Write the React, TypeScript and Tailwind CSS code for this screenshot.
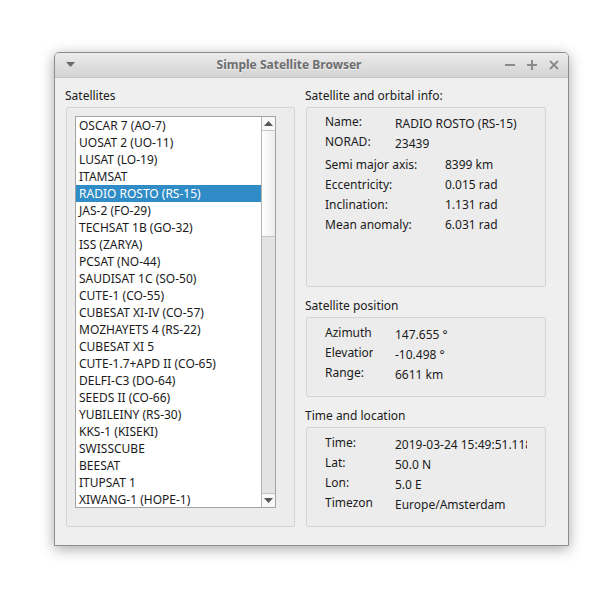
import React from "react";

const sats = [
  "OSCAR 7 (AO-7)",
  "UOSAT 2 (UO-11)",
  "LUSAT (LO-19)",
  "ITAMSAT",
  "RADIO ROSTO (RS-15)",
  "JAS-2 (FO-29)",
  "TECHSAT 1B (GO-32)",
  "ISS (ZARYA)",
  "PCSAT (NO-44)",
  "SAUDISAT 1C (SO-50)",
  "CUTE-1 (CO-55)",
  "CUBESAT XI-IV (CO-57)",
  "MOZHAYETS 4 (RS-22)",
  "CUBESAT XI 5",
  "CUTE-1.7+APD II (CO-65)",
  "DELFI-C3 (DO-64)",
  "SEEDS II (CO-66)",
  "YUBILEINY (RS-30)",
  "KKS-1 (KISEKI)",
  "SWISSCUBE",
  "BEESAT",
  "ITUPSAT 1",
  "XIWANG-1 (HOPE-1)",
];

function Row({ label, value, labelW = "w-[48px]", gap = "ml-[22px]" }: { label: string; value: string; labelW?: string; gap?: string }) {
  return (
    <div className="flex h-[20px] items-start">
      <div className={`${labelW} overflow-hidden whitespace-nowrap leading-[18px]`}>{label}</div>
      <div className={`${gap} mt-[1.5px] overflow-hidden whitespace-nowrap leading-[18px] flex-1`}>{value}</div>
    </div>
  );
}

export default function App() {
  return (
    <div className="min-h-[605px] w-[616px] bg-white pt-[52px] pl-[54px] text-[12px] text-[#1b1b1b]" style={{ fontFamily: '"Noto Sans", "Open Sans", sans-serif' }}>
      <div className="w-[515px] h-[494px] border border-[#8d8d8d] rounded-t-[5px] bg-[#efefef] shadow-[0_3px_14px_rgba(0,0,0,0.35)] flex flex-col overflow-hidden">
        {/* Title bar */}
        <div className="h-[25px] flex items-center bg-gradient-to-b from-[#ececec] to-[#d3d3d3] border-b border-[#c4c4c4] relative">
          <div className="w-[30px] flex justify-center">
            <svg width="9" height="6" viewBox="0 0 9 6"><path d="M0 0H9L4.5 5Z" fill="#6a6a6a" /></svg>
          </div>
          <div className="flex-1 text-center font-bold text-[12px] text-[#6e6e6e] pr-[12px] [text-shadow:0_1px_0_rgba(255,255,255,0.6)]">Simple Satellite Browser</div>
          <div className="flex items-center gap-[12px] pr-[9px]">
            <svg width="10" height="10" viewBox="0 0 10 10"><rect x="0" y="4" width="10" height="2" fill="#8a8a8a" /></svg>
            <svg width="10" height="10" viewBox="0 0 10 10"><rect x="0" y="4" width="10" height="2" fill="#8a8a8a" /><rect x="4" y="0" width="2" height="10" fill="#8a8a8a" /></svg>
            <svg width="10" height="10" viewBox="0 0 10 10"><path d="M1 1L9 9M9 1L1 9" stroke="#8a8a8a" strokeWidth="1.8" /></svg>
          </div>
        </div>

        {/* Body */}
        <div className="flex pl-[10px] pt-[9px] gap-[10px]">
          {/* Left column */}
          <div className="w-[230px] flex flex-col">
            <div className="h-[20px] leading-[18px] pl-[0px] text-[#1b1b1b]">Satellites</div>
            <div className="ml-[1px] w-[229px] h-[420px] border border-[#d4d4d4] bg-[#ececec] rounded-[2px] pl-[8px] pt-[8px]">
              <div className="w-[201px] h-[392px] border border-[#a3a3a3] bg-white flex">
                <div className="flex-1 overflow-hidden">
                  {sats.map((s, i) => (
                    <div
                      key={s}
                      className={`h-[17px] leading-[17px] pl-[3px] whitespace-nowrap ${i === 4 ? "bg-[#308cc6] text-white" : ""}`}
                    >
                      {s}
                    </div>
                  ))}
                </div>
                <div className="w-[14px] border-l border-[#b4b4b4] flex flex-col bg-[#e3e3e3]">
                  <div className="h-[14px] bg-[#f8f8f8] border-b border-[#c4c4c4] flex items-center justify-center">
                    <svg width="9" height="5" viewBox="0 0 9 5"><path d="M4.5 0L9 5H0Z" fill="#555" /></svg>
                  </div>
                  <div className="h-[106px] bg-gradient-to-r from-white to-[#ececec] border-b border-[#c4c4c4]" />
                  <div className="flex-1" />
                  <div className="h-[14px] bg-[#f8f8f8] border-t border-[#c4c4c4] flex items-center justify-center">
                    <svg width="9" height="5" viewBox="0 0 9 5"><path d="M0 0H9L4.5 5Z" fill="#555" /></svg>
                  </div>
                </div>
              </div>
            </div>
          </div>

          {/* Right column */}
          <div className="w-[241px] flex flex-col">
            <div className="h-[20px] leading-[18px]">Satellite and orbital info:</div>
            <div className="ml-[1px] h-[180px] border border-[#d4d4d4] bg-[#ececec] rounded-[2px] pl-[18px] pt-[5px]">
              <Row label="Name:" value="RADIO ROSTO (RS-15)" labelW="w-[60px]" gap="ml-[10px]" />
              <div className="h-[23px]">
                <Row label="NORAD:" value="23439" labelW="w-[60px]" gap="ml-[10px]" />
              </div>
              <div className="flex flex-col">
                {[
                  ["Semi major axis:", "8399 km"],
                  ["Eccentricity:", "0.015 rad"],
                  ["Inclination:", "1.131 rad"],
                  ["Mean anomaly:", "6.031 rad"],
                ].map(([l, v]) => (
                  <div key={l} className="flex h-[20px] leading-[18px]">
                    <div className="w-[120px] whitespace-nowrap">{l}</div>
                    <div className="whitespace-nowrap">{v}</div>
                  </div>
                ))}
              </div>
            </div>

            <div className="h-[20px] leading-[18px] mt-[10px]">Satellite position</div>
            <div className="ml-[1px] h-[80px] border border-[#d4d4d4] bg-[#ececec] rounded-[2px] pl-[18px] pt-[6px]">
              <Row label="Azimuth" value="147.655 °" />
              <Row label="Elevation" value="-10.498 °" />
              <Row label="Range:" value="6611 km" />
            </div>

            <div className="h-[20px] leading-[18px] mt-[10px]">Time and location</div>
            <div className="ml-[1px] h-[100px] border border-[#d4d4d4] bg-[#ececec] rounded-[2px] pl-[18px] pt-[6px] pr-[18px]">
              <Row label="Time:" value="2019-03-24 15:49:51.118" />
              <Row label="Lat:" value="50.0 N" />
              <Row label="Lon:" value="5.0 E" />
              <Row label="Timezone" value="Europe/Amsterdam" />
            </div>
          </div>
        </div>
      </div>
    </div>
  );
}
